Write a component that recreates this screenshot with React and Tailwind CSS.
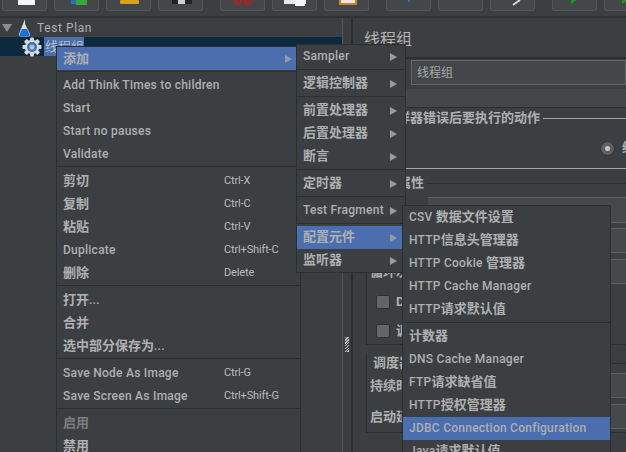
import React from 'react';

const mainMenu = [
  { t: '添加', arrow: true, on: true },
  { sep: 1, h: 'h-[3px]' },
  { t: 'Add Think Times to children' },
  { t: 'Start' },
  { t: 'Start no pauses' },
  { t: 'Validate' },
  { sep: 1 },
  { t: '剪切', k: 'Ctrl-X' },
  { t: '复制', k: 'Ctrl-C' },
  { t: '粘贴', k: 'Ctrl-V' },
  { t: 'Duplicate', k: 'Ctrl+Shift-C' },
  { t: '删除', k: 'Delete' },
  { sep: 1 },
  { t: '打开...' },
  { t: '合并' },
  { t: '选中部分保存为...' },
  { sep: 1 },
  { t: 'Save Node As Image', k: 'Ctrl-G' },
  { t: 'Save Screen As Image', k: 'Ctrl+Shift-G' },
  { sep: 1 },
  { t: '启用', dim: true },
  { t: '禁用' },
];

const addMenu = [
  { t: 'Sampler', arrow: true },
  { sep: 1 },
  { t: '逻辑控制器', arrow: true },
  { sep: 1 },
  { t: '前置处理器', arrow: true },
  { t: '后置处理器', arrow: true },
  { t: '断言', arrow: true },
  { sep: 1 },
  { t: '定时器', arrow: true },
  { sep: 1 },
  { t: 'Test Fragment', arrow: true },
  { sep: 1 },
  { t: '配置元件', arrow: true, on: true },
  { t: '监听器', arrow: true },
];

const configMenu = [
  { t: 'CSV 数据文件设置' },
  { t: 'HTTP信息头管理器' },
  { t: 'HTTP Cookie 管理器' },
  { t: 'HTTP Cache Manager' },
  { t: 'HTTP请求默认值' },
  { sep: 1 },
  { t: '计数器' },
  { t: 'DNS Cache Manager' },
  { t: 'FTP请求缺省值' },
  { t: 'HTTP授权管理器' },
  { t: 'JDBC Connection Configuration', on: true },
  { t: 'Java请求默认值' },
];

// latin and cjk runs have different sizes in the swing menus
const Label = ({ text }) =>
  text.split(/([^\x00-\x7f]+)/).filter(Boolean).map((run, i) => (
    <span key={i} className={/[^\x00-\x7f]/.test(run) ? 'text-[13px] font-bold' : 'text-[12px] font-medium tracking-[0.25px]'}>
      {run}
    </span>
  ));

const MenuRows = ({ items, textPad = 'pb-[1px]' }) =>
  items.map((it, i) => {
    if (it.sep) {
      return (
        <div key={i} className={it.h || 'h-[4px]'}>
          <div className="mt-[1px] h-px bg-[#2c2e2f]" />
        </div>
      );
    }
    return (
      <div key={i} className={`flex h-[23px] shrink-0 items-center pl-[6px] ${it.on ? 'bg-[#4b6eaf]' : ''}`}>
        <span className={`whitespace-nowrap ${textPad} ${it.dim ? 'text-[#7d7d7d]' : 'text-[#aeb0b1]'}`}>
          <Label text={it.t} />
        </span>
        {it.k && <span className="absolute left-[167px] pt-[2px] text-[11px] tracking-[-0.15px] text-[#bbbbbb]">{it.k}</span>}
        {it.arrow && <span className="ml-auto mr-[8px] h-0 w-0 border-y-[4px] border-l-[7px] border-y-transparent border-l-[#9a9a9a]" />}
      </div>
    );
  });

const ToolButton = ({ children, className = '' }) => (
  <div className={`h-[11px] w-[45px] shrink-0 overflow-hidden rounded-b-[3px] border border-t-0 border-[#54575a] bg-[#43474a] ${className}`}>
    <svg width="44" height="10" viewBox="0 0 44 10">{children}</svg>
  </div>
);

const Legend = ({ text, className = '' }) => (
  <div className={`flex items-center ${className}`}>
    <span className="whitespace-nowrap text-[13px] font-bold text-[#aeb0b1]">{text}</span>
    <div className="ml-[3px] h-px flex-1 bg-[#2c2e2f]" />
  </div>
);

const Field = ({ className = '' }) => <div className={`border-y border-[#5d5f60] bg-[#45494a] ${className}`} />;

const Checkbox = ({ label, className = '' }) => (
  <div className={`flex items-center ${className}`}>
    <div className="ml-[9px] h-[14px] w-[14px] rounded-[2px] border border-[#2e3031] bg-[#636566]" />
    <span className="ml-[6px] text-[13px] font-bold text-[#aeb0b1]">{label}</span>
  </div>
);

export default function App() {
  return (
    <div className="relative flex h-[452px] w-[626px] flex-col overflow-hidden bg-[#3c3f41] font-['Roboto','Noto_Sans_CJK_SC',sans-serif]">
      {/* toolbar */}
      <div className="flex h-[16px] shrink-0 pl-[2px]">
        <ToolButton><rect x="15" y="0" width="17" height="5" fill="#f4f4f4" /></ToolButton>
        <ToolButton className="ml-[7px]">
          <rect x="16" y="0" width="5" height="4" fill="#2a6fc0" />
          <rect x="21" y="0" width="11" height="5" fill="#3aa53a" />
        </ToolButton>
        <ToolButton className="ml-[7px]"><rect x="13" y="0" width="19" height="4" rx="1" fill="#d9a21b" /></ToolButton>
        <ToolButton className="ml-[7px]">
          <rect x="13" y="0" width="20" height="4" fill="#222" />
          <rect x="19" y="0" width="7" height="4" fill="#cfcfcf" />
        </ToolButton>
        <ToolButton className="ml-[17px]">
          <circle cx="17" cy="1" r="3" fill="none" stroke="#c01818" strokeWidth="2" />
          <circle cx="27" cy="1" r="3" fill="none" stroke="#c01818" strokeWidth="2" />
        </ToolButton>
        <ToolButton className="ml-[7px]">
          <rect x="11" y="0" width="22" height="4" fill="#e8e8e8" />
          <rect x="22" y="0" width="10" height="6" fill="#f4f4f4" />
        </ToolButton>
        <ToolButton className="ml-[7px]"><rect x="14" y="0" width="18" height="5" fill="#c9861f" /><rect x="16" y="0" width="14" height="3" fill="#e8e8e8" /></ToolButton>
        <ToolButton className="ml-[17px]"><rect x="21" y="0" width="2" height="2" fill="#2a6fc0" /></ToolButton>
        <ToolButton className="ml-[7px]" />
        <ToolButton className="ml-[7px]"><path d="M22 5 L29 0" stroke="#d8d8d8" strokeWidth="2" /></ToolButton>
        <ToolButton className="ml-[17px]"><path d="M18 0 H24 L18 4 Z" fill="#12a012" /></ToolButton>
        <ToolButton className="ml-[7px]"><path d="M17 0 H24 L17 4 Z" fill="#12a012" /></ToolButton>
      </div>

      <div className="flex min-h-0 flex-1 border-t-2 border-[#2f3133]">
        {/* tree */}
        <div className="w-[343px] shrink-0 border-r border-[#515456]">
          <div className="flex h-[19px] items-center pl-[2px]">
            <span className="h-0 w-0 border-x-[5px] border-t-[8px] border-x-transparent border-t-[#8c8c8c]" />
            <svg className="ml-[6px]" width="13" height="18" viewBox="0 0 13 18">
              <path d="M7 0 V5 L12 15 Q12.5 17.5 10 17.5 H3 Q0.5 17.5 1 15 L5 5 Z" fill="#d8dde6" />
              <path d="M4 10 H9 L11.5 15.5 Q12 17.5 10 17.5 H3 Q1 17.5 1.5 15.5 Z" fill="#1f6fd6" />
            </svg>
            <span className="ml-[6px] text-[12px] tracking-[0.6px] text-[#a9b0b0]">Test Plan</span>
          </div>
          <div className="flex h-[19px] items-center bg-[#0d293e] pl-[22px]">
            <svg width="20" height="20" viewBox="0 0 20 20">
              <g fill="#d5d8dc">
                <circle cx="10" cy="10" r="7.2" />
                <rect x="8" y="0.5" width="4" height="19" rx="1" />
                <rect x="0.5" y="8" width="19" height="4" rx="1" />
                <rect x="8" y="0.5" width="4" height="19" rx="1" transform="rotate(45 10 10)" />
                <rect x="8" y="0.5" width="4" height="19" rx="1" transform="rotate(-45 10 10)" />
              </g>
              <circle cx="10" cy="10" r="5" fill="#3d6fa8" />
              <circle cx="10" cy="10" r="2.6" fill="#a9c6ea" />
            </svg>
            <span className="ml-[2px] flex h-[19px] w-[40px] items-center bg-[#4b6eaf] pl-[1px] text-[13px] text-[#bbbbbb]">线程组</span>
          </div>
        </div>

        {/* splitter */}
        <div className="flex w-[10px] shrink-0 items-start justify-center border-r-2 border-[#2c2e2f] pt-[319px]">
          <div className="h-[15px] w-[4px] bg-[repeating-linear-gradient(135deg,#c8c8c8_0,#c8c8c8_1px,#3c3f41_1px,#3c3f41_2px)]" />
        </div>

        {/* thread group panel */}
        <div className="min-w-0 flex-1 overflow-hidden">
          <div className="flex h-[39px] items-end pb-[6px] pl-[11px] text-[16px] leading-[22px] text-[#b4b4b4]">线程组</div>
          <div className="flex h-[32px] flex-col border-t-2 border-[#2c2e2f]">
            <div className="ml-[58px] mt-px flex h-[25px] items-center border border-[#646667] bg-[#43474a] pl-[5px] text-[12px] text-[#a8a8a8]">线程组</div>
          </div>
          <div className="h-[18px] bg-[#43474a]" />
          <div className="h-px bg-[#2c2e2f]" />
          <div className="flex h-[20px] items-center pl-[18px]">
            <span className="whitespace-nowrap text-[13px] font-bold text-[#aeb0b1]">在取样器错误后要执行的动作</span>
            <div className="ml-[3px] h-px flex-1 bg-[#a4a6a7]" />
          </div>
          <div className="flex h-[40px] items-center overflow-hidden pl-[247px]">
            <div className="flex h-[15px] w-[15px] shrink-0 items-center justify-center rounded-full border border-[#2e3031] bg-[#5e6062]">
              <div className="h-[5px] w-[5px] rounded-full bg-[#c8c8c8]" />
            </div>
            <span className="ml-[7px] whitespace-nowrap text-[13px] font-bold text-[#aeb0b1]">继续</span>
          </div>
          <div className="h-px bg-[#a4a6a7]" />
          <Legend text="线程属性" className="h-[28px] pl-[19px]" />
          <Field className="ml-[75px] h-[26px]" />
          <Field className="ml-[75px] mt-[5px] h-[25px]" />

          <div className="ml-[13px] mt-[6px] flex h-[86px] flex-col border-b border-l border-[#2c2e2f]">
            <div className="flex h-[25px] items-center">
              <span className="ml-[3px] w-[58px] whitespace-nowrap text-[13px] font-bold text-[#aeb0b1]">循环次数</span>
              <Field className="h-[25px] flex-1" />
            </div>
            <Checkbox label="D" className="mt-[10px] h-[16px]" />
            <Checkbox label="调" className="mt-[13px] h-[16px]" />
          </div>

          <Legend text="调度器配置" className="ml-[13px] mt-[8px] h-[20px] border-l border-[#2c2e2f] pl-[6px]" />
          <div className="ml-[13px] flex h-[60px] flex-col border-b border-l border-[#2c2e2f] pl-[3px]">
            <div className="flex h-[25px] shrink-0 items-center">
              <span className="w-[58px] whitespace-nowrap text-[13px] font-bold text-[#aeb0b1]">持续时间</span>
              <Field className="h-[25px] flex-1" />
            </div>
            <div className="mt-[6px] flex h-[25px] shrink-0 items-center">
              <span className="w-[58px] whitespace-nowrap text-[13px] font-bold text-[#aeb0b1]">启动延迟</span>
              <Field className="h-[25px] flex-1" />
            </div>
          </div>
        </div>
      </div>

      {/* context menus */}
      <div className="absolute left-[56px] top-[46px] z-10 flex w-[245px] flex-col border border-[#2c2e2f] bg-[#3c3f41]">
        <MenuRows items={mainMenu} />
      </div>
      <div className="absolute left-[296px] top-[44px] z-20 flex w-[110px] flex-col border border-[#2c2e2f] bg-[#3c3f41]">
        <MenuRows items={addMenu} textPad="pb-[3px]" />
      </div>
      <div className="absolute left-[402px] top-[205px] z-30 flex w-[209px] flex-col border border-[#2c2e2f] bg-[#3c3f41]">
        <MenuRows items={configMenu} textPad="pb-[3px]" />
      </div>
    </div>
  );
}
